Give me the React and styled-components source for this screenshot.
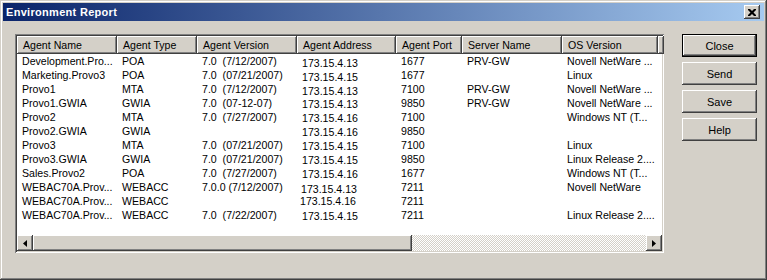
import React from 'react';
import styled, { createGlobalStyle } from 'styled-components';

const GlobalStyle = createGlobalStyle`
  html, body {
    margin: 0;
    padding: 0;
    background: #d4d0c8;
  }
  body {
    font-family: "Liberation Sans", Arial, sans-serif;
    font-size: 10.6px;
    color: #000;
  }
`;

const raised = `
  box-shadow: inset -1px -1px #404040, inset 1px 1px #fff,
    inset -2px -2px #808080, inset 2px 2px #d4d0c8;
`;

const Window = styled.div`
  width: 767px;
  height: 280px;
  box-sizing: border-box;
  padding: 3px;
  background: #d4d0c8;
  box-shadow: inset -1px -1px #404040, inset 1px 1px #d4d0c8,
    inset -2px -2px #808080, inset 2px 2px #fff;
  display: flex;
  flex-direction: column;
`;

const TitleBar = styled.div`
  height: 18px;
  flex-shrink: 0;
  display: flex;
  align-items: center;
  justify-content: space-between;
  padding: 0 4px 0 3px;
  background: linear-gradient(to right, #0a246a, #a6caf0);
`;

const TitleText = styled.span`
  color: #fff;
  font-weight: bold;
  font-size: 11px;
  letter-spacing: 0.3px;
`;

const TitleButton = styled.div`
  width: 16px;
  height: 14px;
  background: #d4d0c8;
  ${raised}
  display: flex;
  align-items: center;
  justify-content: center;
`;

const Body = styled.div`
  flex: 1;
  display: flex;
  gap: 18px;
  padding: 13px 7px 0 12px;
`;

const ListView = styled.div`
  width: 649px;
  height: 219px;
  box-sizing: border-box;
  padding: 2px;
  background: #fff;
  box-shadow: inset 1px 1px #808080, inset -1px -1px #fff,
    inset 2px 2px #404040, inset -2px -2px #d4d0c8;
  display: flex;
  flex-direction: column;
  overflow: hidden;
`;

const HeaderRow = styled.div`
  display: flex;
  height: 18px;
  flex-shrink: 0;
`;

const HeaderCell = styled.div`
  width: ${(p) => p.$w}px;
  flex-shrink: 0;
  box-sizing: border-box;
  padding-left: 6px;
  line-height: 18px;
  white-space: nowrap;
  overflow: hidden;
  background: #d4d0c8;
  ${raised}
`;

const Rows = styled.div`
  flex: 1;
`;

const Row = styled.div`
  display: flex;
  height: 14px;
`;

const Cell = styled.div`
  width: ${(p) => p.$w}px;
  flex-shrink: 0;
  box-sizing: border-box;
  padding-left: ${(p) => 5 + (p.$dx || 0)}px;
  padding-top: ${(p) => p.$dy || 0}px;
  line-height: 14px;
  white-space: pre;
  overflow: hidden;
`;

const ScrollBar = styled.div`
  display: flex;
  height: 16px;
  flex-shrink: 0;
`;

const ArrowButton = styled.div`
  width: 16px;
  height: 16px;
  flex-shrink: 0;
  background: #d4d0c8;
  ${raised}
  display: flex;
  align-items: center;
  justify-content: center;
`;

const Thumb = styled.div`
  width: ${(p) => p.$w}px;
  flex-shrink: 0;
  background: #d4d0c8;
  ${raised}
`;

const Track = styled.div`
  flex: 1;
  background: repeating-conic-gradient(#fff 0 25%, #d4d0c8 0 50%) 0 0 / 2px 2px;
`;

const ButtonColumn = styled.div`
  width: 75px;
  display: flex;
  flex-direction: column;
  gap: 5px;
`;

const Button = styled.div`
  height: 23px;
  display: flex;
  align-items: center;
  justify-content: center;
  font-size: 11px;
  background: #d4d0c8;
  box-shadow: ${(p) =>
    p.$default
      ? 'inset 0 0 0 1px #000, inset -2px -2px #404040, inset 2px 2px #fff, inset -3px -3px #808080'
      : 'inset -1px -1px #404040, inset 1px 1px #fff, inset -2px -2px #808080, inset 2px 2px #d4d0c8'};
`;

const columns = [
  { title: 'Agent Name', w: 100 },
  { title: 'Agent Type', w: 80 },
  { title: 'Agent Version', w: 100 },
  { title: 'Agent Address', w: 99 },
  { title: 'Agent Port', w: 66 },
  { title: 'Server Name', w: 100 },
  { title: 'OS Version', w: 96 },
];

// address column sits a touch off in the original capture
const rows = [
  ['Development.Pro...', 'POA', '7.0  (7/12/2007)', ['173.15.4.13', 0, 2], '1677', 'PRV-GW', 'Novell NetWare ...'],
  ['Marketing.Provo3', 'POA', '7.0  (07/21/2007)', ['173.15.4.15', 0, 2], '1677', '', 'Linux'],
  ['Provo1', 'MTA', '7.0  (7/12/2007)', ['173.15.4.13', 0, 2], '7100', 'PRV-GW', 'Novell NetWare ...'],
  ['Provo1.GWIA', 'GWIA', '7.0  (07-12-07)', ['173.15.4.13', 0, 1], '9850', 'PRV-GW', 'Novell NetWare ...'],
  ['Provo2', 'MTA', '7.0  (7/27/2007)', ['173.15.4.16', 0, 1], '7100', '', 'Windows NT (T...'],
  ['Provo2.GWIA', 'GWIA', '', ['173.15.4.16', 0, 1], '9850', '', ''],
  ['Provo3', 'MTA', '7.0  (07/21/2007)', ['173.15.4.15', 0, 1], '7100', '', 'Linux'],
  ['Provo3.GWIA', 'GWIA', '7.0  (07/21/2007)', ['173.15.4.15', 0, 1], '9850', '', 'Linux Release 2....'],
  ['Sales.Provo2', 'POA', '7.0  (7/27/2007)', ['173.15.4.16', 0, 1], '1677', '', 'Windows NT (T...'],
  ['WEBAC70A.Prov...', 'WEBACC', '7.0.0 (7/12/2007)', ['173.15.4.13', -1, 2], '7211', '', 'Novell NetWare'],
  ['WEBAC70A.Prov...', 'WEBACC', '', ['173.15.4.16', -2, 0], '7211', '', ''],
  ['WEBAC70A.Prov...', 'WEBACC', '7.0  (7/22/2007)', ['173.15.4.15', 0, 1], '7211', '', 'Linux Release 2....'],
];

const CloseGlyph = () => (
  <svg width="8" height="7" viewBox="0 0 8 7">
    <path d="M0 0h2l2 2 2-2h2v1l-2.5 2.5L8 6v1H6L4 5 2 7H0V6l2.5-2.5L0 1z" fill="#000" />
  </svg>
);

const Arrow = ({ dir }) => (
  <svg width="4" height="7" viewBox="0 0 4 7">
    <path d={dir === 'left' ? 'M4 0v7L0 3.5z' : 'M0 0v7l4-3.5z'} fill="#000" />
  </svg>
);

const App = () => (
  <>
    <GlobalStyle />
    <Window>
      <TitleBar>
        <TitleText>Environment Report</TitleText>
        <TitleButton>
          <CloseGlyph />
        </TitleButton>
      </TitleBar>
      <Body>
        <ListView>
          <HeaderRow>
            {columns.map((c) => (
              <HeaderCell key={c.title} $w={c.w}>
                {c.title}
              </HeaderCell>
            ))}
            <HeaderCell $w={4} />
          </HeaderRow>
          <Rows>
            {rows.map((r, i) => (
              <Row key={i}>
                {r.map((v, j) =>
                  Array.isArray(v) ? (
                    <Cell key={j} $w={columns[j].w} $dx={v[1]} $dy={v[2]}>
                      {v[0]}
                    </Cell>
                  ) : (
                    <Cell key={j} $w={columns[j].w}>
                      {v}
                    </Cell>
                  )
                )}
              </Row>
            ))}
          </Rows>
          <ScrollBar>
            <ArrowButton>
              <Arrow dir="left" />
            </ArrowButton>
            <Thumb $w={379} />
            <Track />
            <ArrowButton>
              <Arrow dir="right" />
            </ArrowButton>
          </ScrollBar>
        </ListView>
        <ButtonColumn>
          <Button $default>Close</Button>
          <Button>Send</Button>
          <Button>Save</Button>
          <Button>Help</Button>
        </ButtonColumn>
      </Body>
    </Window>
  </>
);

export default App;
